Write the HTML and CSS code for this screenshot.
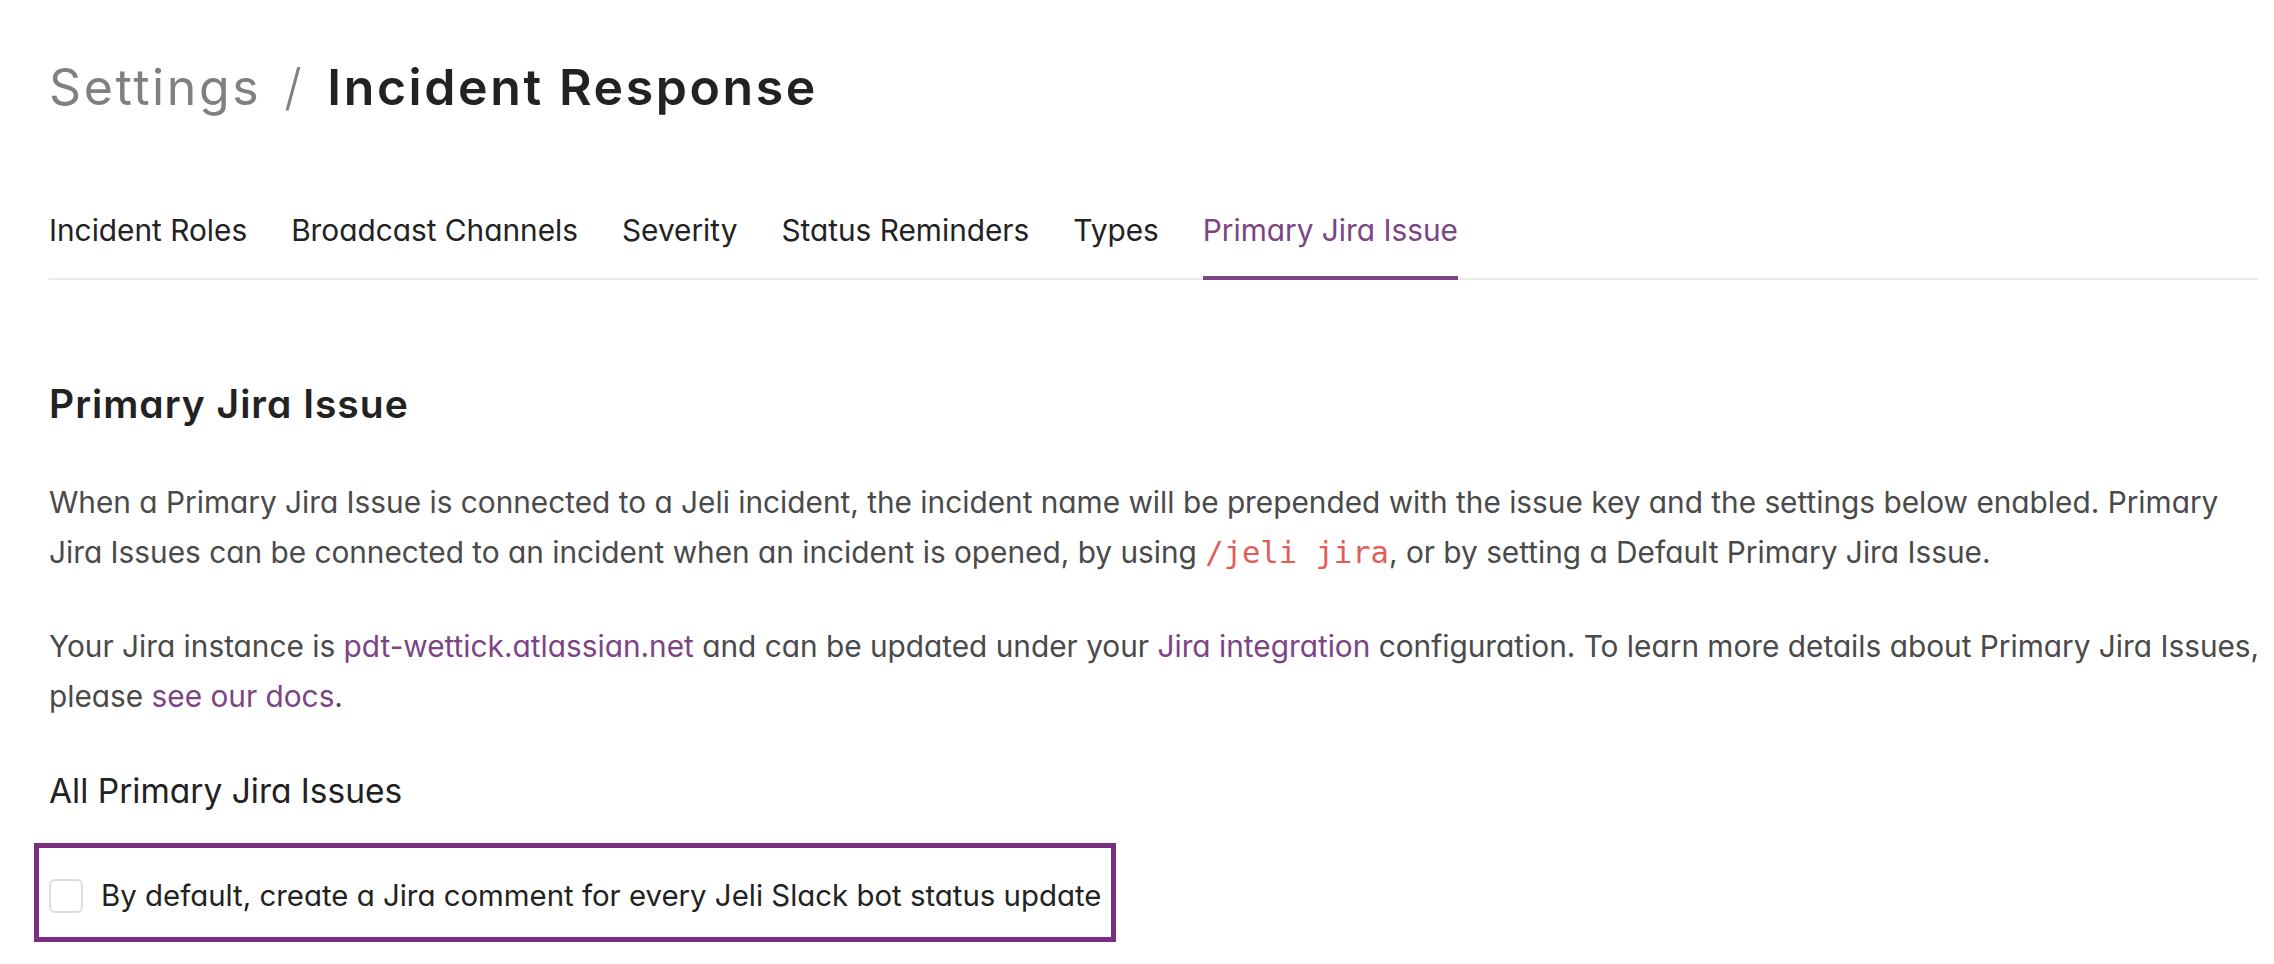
FILE: index.html
```html
<!DOCTYPE html>
<html>
<head>
<meta charset="utf-8">
<link rel="stylesheet" href="styles.css">
</head>
<body>
<div class="page">
  <h1 class="title"><span class="crumb">Settings</span><span class="slash">/</span><span class="current">Incident Response</span></h1>
  <nav class="tabs">
    <a class="tab">Incident Roles</a>
    <a class="tab">Broadcast Channels</a>
    <a class="tab">Severity</a>
    <a class="tab">Status Reminders</a>
    <a class="tab">Types</a>
    <a class="tab active">Primary Jira Issue</a>
  </nav>
  <section class="content">
    <h2 class="section-title">Primary Jira Issue</h2>
    <p class="text">When a Primary Jira Issue is connected to a Jeli incident, the incident name will be prepended with the issue key and the settings below enabled. Primary Jira Issues can be connected to an incident when an incident is opened, by using <code class="cmd">/jeli jira</code>, or by setting a Default Primary Jira Issue.</p>
    <p class="text">Your Jira instance is <a class="link">pdt-wettick.atlassian.net</a> and can be updated under your <a class="link">Jira integration</a> configuration. To learn more details about Primary Jira Issues, please <a class="link">see our docs</a>.</p>
    <h3 class="subhead">All Primary Jira Issues</h3>
    <div class="highlight">
      <label class="check-row"><span class="checkbox"></span><span class="check-label">By default, create a Jira comment for every Jeli Slack bot status update</span></label>
    </div>
  </section>
</div>
</body>
</html>
```
FILE: styles.css
```css
body{margin:0;background:#fff;}
.page{padding:57px 16px 0 49px;font-family:"Inter",sans-serif;font-feature-settings:"cv11";color:#4a4a4a;}
.title{margin:0;font-size:50px;line-height:60px;font-weight:600;letter-spacing:2.6px;display:flex;gap:23px;}
.crumb{color:#808080;font-weight:400;}
.slash{color:#808080;font-weight:300;}
.current{color:#222;}
.tabs{display:flex;gap:44px;border-bottom:2px solid #ebebeb;margin-top:95px;}
.tab{font-size:29.8px;line-height:36px;color:#222;padding-bottom:28px;}
.tab.active{color:#7b4585;border-bottom:4px solid #7b4585;margin-bottom:-2px;}
.content{margin-right:-9px;}
.section-title{font-size:39px;line-height:46px;font-weight:600;letter-spacing:1px;color:#222;margin:101px 0 50px;}
.text{font-size:29.8px;line-height:50px;margin:0 0 44px;}
.cmd{color:#e25c58;font-family:"DejaVu Sans Mono",monospace;font-size:30.5px;line-height:1;}
.link{color:#7b4585;}
.subhead{font-size:33.5px;line-height:42px;font-weight:400;color:#222;margin:49px 0 31px;}
.highlight{width:fit-content;border:5px solid #7b2f80;margin-left:-15px;padding:30px 10px 23px;}
.check-row{display:flex;align-items:center;gap:18px;}
.checkbox{box-sizing:border-box;flex:none;width:34px;height:34px;border:2px solid #dcdcdc;border-radius:6px;}
.check-label{font-size:29.4px;line-height:36px;color:#222;white-space:nowrap;}
```
